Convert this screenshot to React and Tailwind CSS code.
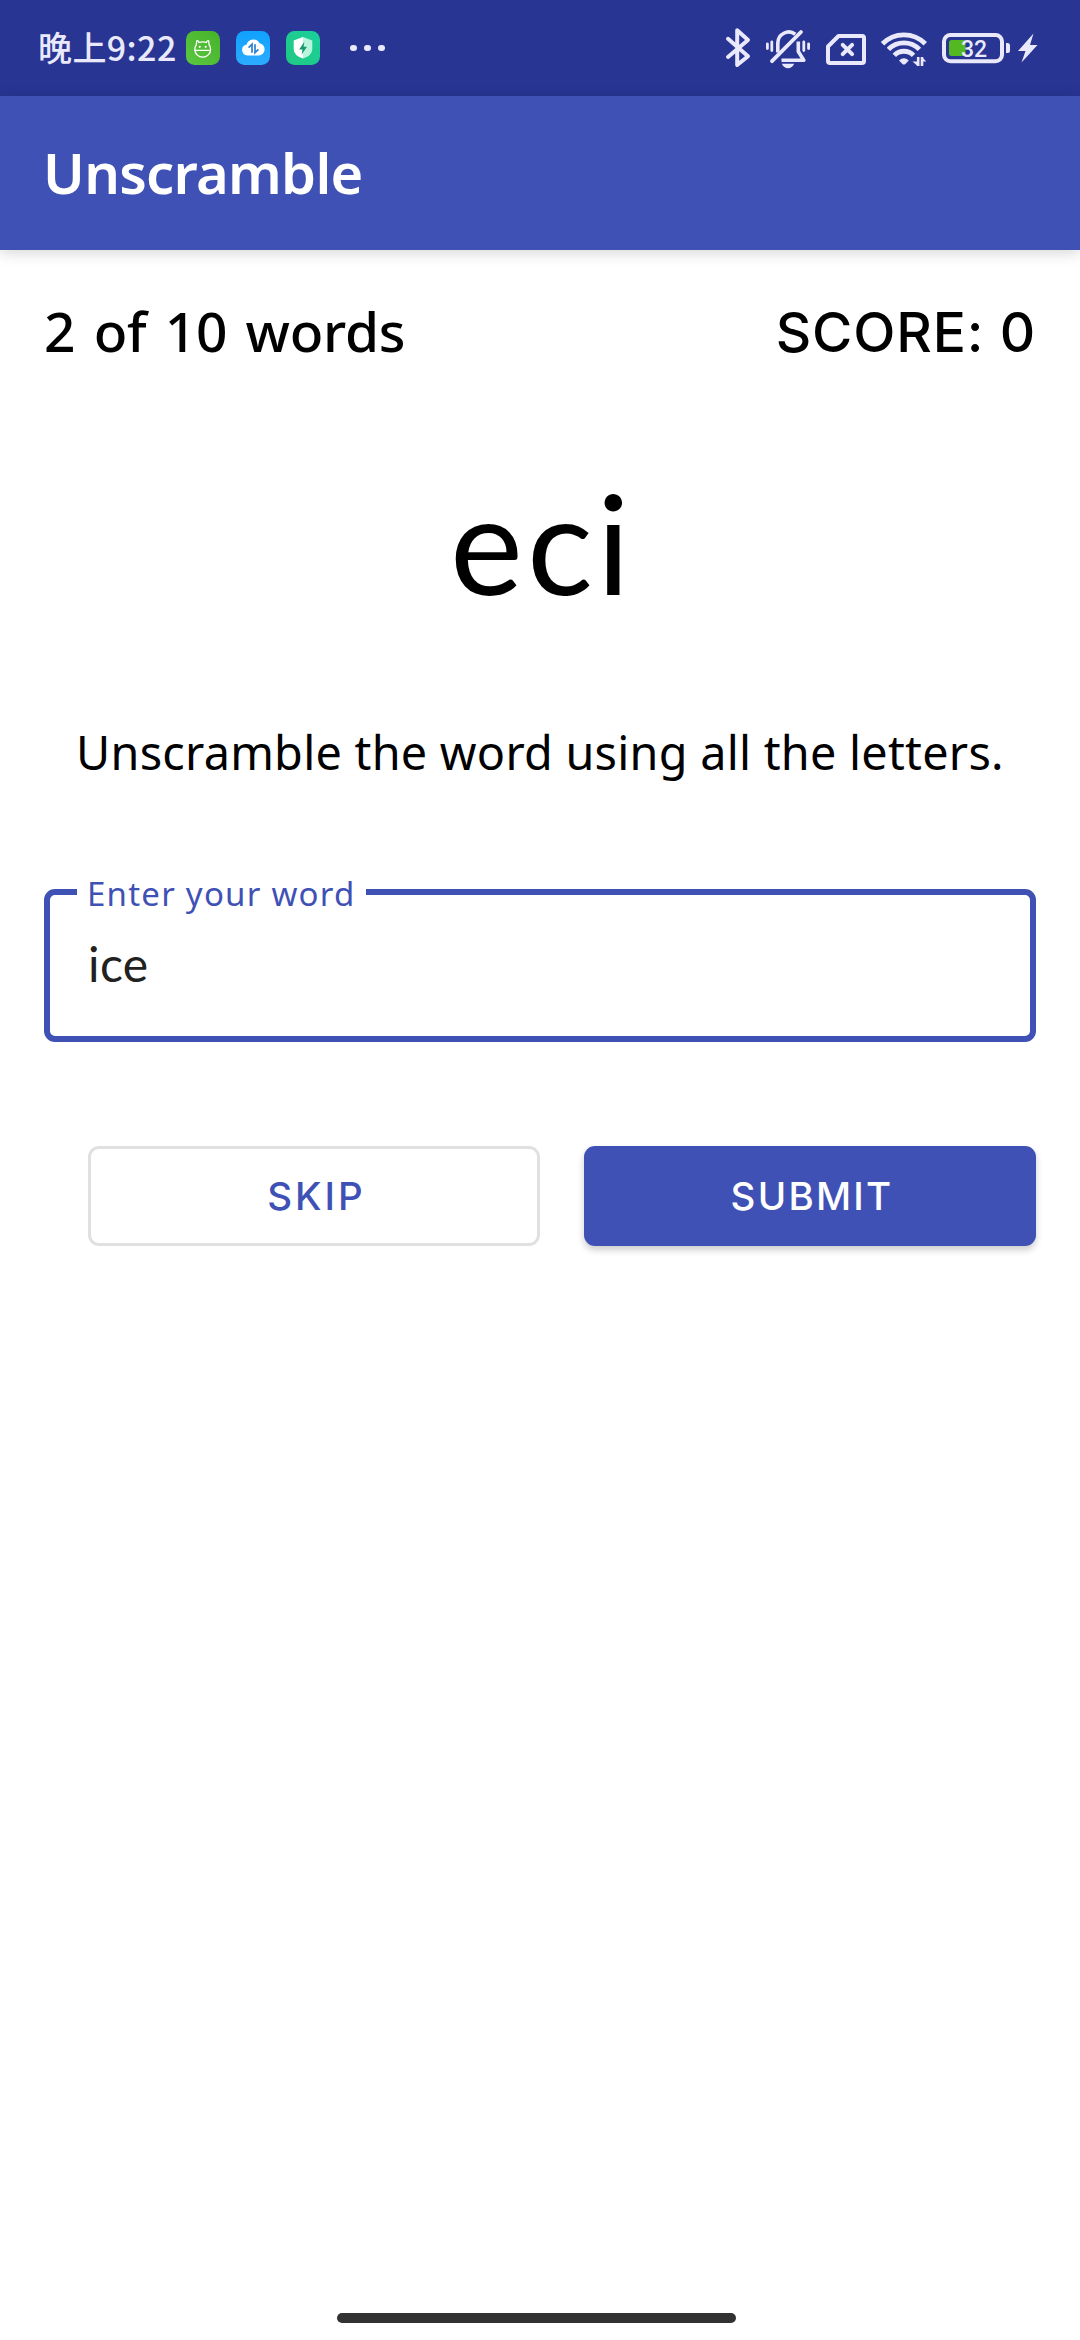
import React from "react";

const INK = "#e9e9fb";

function PotIcon() {
  return (
    <svg className="h-[34px] w-[34px]" viewBox="186 31 34 34">
      <defs>
        <linearGradient id="pot" x1="0" y1="1" x2="1" y2="0">
          <stop offset="0" stopColor="#5cc640" />
          <stop offset="1" stopColor="#45b329" />
        </linearGradient>
      </defs>
      <rect x="186" y="31" width="34" height="34" rx="8.5" fill="url(#pot)" />
      <g fill="none" stroke="#fff" strokeWidth="1.3" strokeLinecap="round" strokeLinejoin="round">
        <path d="M196.4 44.5l.3-3.6q1.6-.6 2.4 1.6q3.6-1.1 7.2 0q.8-2.2 2.4-1.6l.3 3.6q1.6 2.2 1.6 4.8a7.9 7.9 0 0 1-15.8 0q0-2.6 1.6-4.8z" />
        <path d="M195 50.3h15.5" />
      </g>
      <circle cx="199.7" cy="46.8" r="1.1" fill="#fff" />
      <circle cx="205.7" cy="46.8" r="1.1" fill="#fff" />
    </svg>
  );
}

function CloudIcon() {
  return (
    <svg className="h-[34px] w-[34px]" viewBox="236 31 34 34">
      <defs>
        <linearGradient id="cloud" x1="0" y1="0" x2="0" y2="1">
          <stop offset="0" stopColor="#0fa2ff" />
          <stop offset="1" stopColor="#2cabff" />
        </linearGradient>
      </defs>
      <rect x="236" y="31" width="34" height="34" rx="8.5" fill="url(#cloud)" />
      <path d="M247.5 55.5a5.6 5.6 0 0 1-.8-11.1a7 7 0 0 1 12.8-1.2a6.2 6.2 0 0 1-.8 12.3z" fill="#fff" />
      <path d="M248.6 47.6l3.4-3.4v8.6M255 44.2v8.6l3.4-3.4" fill="none" stroke="#2a7fd0" strokeWidth="1.7" />
    </svg>
  );
}

function ShieldIcon() {
  return (
    <svg className="h-[34px] w-[34px]" viewBox="286 31 34 34">
      <defs>
        <linearGradient id="shield" x1="1" y1="0" x2="0" y2="1">
          <stop offset="0" stopColor="#1bcf9b" />
          <stop offset="1" stopColor="#1fc983" />
        </linearGradient>
      </defs>
      <rect x="286" y="31" width="34" height="34" rx="8.5" fill="url(#shield)" />
      <path d="M303 37l9.3 3.6v8.4q0 6.5-9.3 9.6z" fill="#b9f5dc" />
      <path d="M303 37l-9.3 3.6v8.4q0 6.5 9.3 9.6z" fill="#fff" />
      <path d="M304.3 41.8l-5.1 7.6h3.3l-.9 5.2l5.4-7.8h-3.4z" fill="#16976c" />
    </svg>
  );
}

function BluetoothIcon() {
  return (
    <svg className="h-12 w-7" viewBox="724 24 28 48" fill="none" stroke={INK} strokeWidth="4" strokeLinecap="round" strokeLinejoin="round">
      <path d="M728 38.8L748 56.2L737.2 65V30.3L748 40L728 57" />
    </svg>
  );
}

function MutedBellIcon() {
  return (
    <svg className="h-12 w-12" viewBox="764 24 48 48" fill="none" stroke={INK} strokeLinecap="round" strokeLinejoin="round">
      <path strokeWidth="3.8" d="M801 32L772 61.2" />
      <path strokeWidth="3.6" strokeLinecap="butt" d="M777.8 52.5V43a11 11 0 0 1 17.5-8.8" />
      <path strokeWidth="3.6" strokeLinecap="butt" d="M798.3 41.5V51.5L803.8 60.2H781.5" />
      <path strokeWidth="2.8" d="M767.4 44v4.5M771.8 42v8.5M803.8 42v8.5M808.6 44v4.5" />
      <path d="M781.8 63.8h12.4q-2 4.4-6.2 4.4t-6.2-4.4z" fill={INK} stroke="none" />
    </svg>
  );
}

function NoSimIcon() {
  return (
    <svg className="h-12 w-11" viewBox="824 24 44 48" fill="none" stroke={INK} strokeWidth="4" strokeLinecap="round" strokeLinejoin="round">
      <path d="M838.5 36h23.5q2 0 2 2v23q0 2-2 2h-32q-2 0-2-2v-14.5z" />
      <path d="M842.7 44.8l9.4 9.4M852.1 44.8l-9.4 9.4" />
    </svg>
  );
}

function WifiIcon() {
  return (
    <svg className="h-12 w-12" viewBox="880 24 48 48" fill="none" stroke={INK} strokeWidth="4.8">
      <path d="M882.5 43.8a30 30 0 0 1 42.8 0" />
      <path d="M888.4 49.4a21.6 21.6 0 0 1 31 0" />
      <path d="M894.3 55.3a13.4 13.4 0 0 1 19.2 0" />
      <path d="M899 60.5q4.9-4.4 9.8 0l-3.4 3.4q-1.5 1.3-3 0z" fill={INK} stroke="none" />
      <path strokeWidth="2.6" d="M918.2 57v9M922 66v-9" />
      <path stroke="none" fill={INK} d="M912.5 61.5h5v4.5zM922 57l4.3 4.5h-4.3z" />
    </svg>
  );
}

function BatteryIcon() {
  return (
    <svg className="h-12 w-[72px]" viewBox="940 24 72 48">
      <rect x="944" y="35" width="58" height="26.2" rx="6.5" fill="none" stroke={INK} strokeWidth="4" />
      <rect x="949" y="40" width="16.5" height="16" rx="2.5" fill="#54b822" />
      <path d="M1006 43h1.5q2.5 0 2.5 2.5v5q0 2.5-2.5 2.5h-1.5z" fill={INK} />
      <text x="961" y="56.7" fontSize="23" fontWeight="500" fontFamily="Roboto, sans-serif" fill={INK}>32</text>
    </svg>
  );
}

function BoltIcon() {
  return (
    <svg className="h-12 w-6" viewBox="1016 24 24 48" fill={INK}>
      <path d="M1033.5 33.5L1018 51h7.5l-4 11.5L1037.5 45h-7.5z" />
    </svg>
  );
}

function StatusBar() {
  return (
    <div className="flex h-24 items-center bg-[#283593] pl-[38px] pr-10">
      <span className="h-[34px] w-[148px] whitespace-nowrap font-['Noto_Sans_CJK_SC',sans-serif] text-[34px] font-medium leading-[32px] tracking-[0.4px] text-[#e9e9fb]">
        晚上9:22
      </span>
      <div className="flex gap-4">
        <PotIcon />
        <CloudIcon />
        <ShieldIcon />
      </div>
      <div className="ml-[30px] flex gap-[7.5px]">
        <span className="size-[6.5px] rounded-full bg-[#e9e9fb]" />
        <span className="size-[6.5px] rounded-full bg-[#e9e9fb]" />
        <span className="size-[6.5px] rounded-full bg-[#e9e9fb]" />
      </div>
      <div className="ml-auto flex gap-3">
        <BluetoothIcon />
        <MutedBellIcon />
        <NoSimIcon />
        <WifiIcon />
        <div className="flex gap-1">
          <BatteryIcon />
          <BoltIcon />
        </div>
      </div>
    </div>
  );
}

export default function App() {
  return (
    <div className="flex h-[2340px] w-[1080px] flex-col bg-white font-['Noto_Sans',sans-serif] text-black">
      <StatusBar />
      <header className="flex h-[154px] items-center bg-[#3f51b5] pb-[2px] pl-[43px] shadow-[0_3px_14px_rgba(0,0,0,0.16)]">
        <h1 className="text-[56px] font-semibold leading-none tracking-[-0.7px] text-white">Unscramble</h1>
      </header>

      <main className="flex grow flex-col px-11 pt-11">
        <div className="flex h-[74px] items-baseline justify-between text-[55px] font-medium leading-[74px]">
          <span className="tracking-[-0.3px] [word-spacing:4.5px]">2 of 10 words</span>
          <span className="font-['Inter',sans-serif] tracking-[0.83px]">SCORE: 0</span>
        </div>

        <p className="mt-[90px] pl-[4px] text-center font-['Lato',sans-serif] text-[138px] leading-[168px] tracking-[4px]">eci</p>

        <p className="mt-[94px] whitespace-nowrap text-center text-[46.75px] leading-[64px] tracking-[0.26px]">
          Unscramble the word using all the letters.
        </p>

        <div className="relative mt-[105px] flex h-[153px] items-center rounded-[11px] border-6 border-[#3f51b5] pb-[3px] pl-[38px]">
          <label className="absolute -top-[21px] left-[27px] w-[289px] whitespace-nowrap bg-white pl-[10px] text-[33px] leading-[40px] tracking-[1.23px] text-[#3f51b5]">
            Enter your word
          </label>
          <span className="font-['Lato',sans-serif] text-[48px] leading-none tracking-[0.4px] text-[#212121]">ice</span>
        </div>

        <div className="mt-[104px] ml-11 grid grid-cols-2 gap-11 font-['Inter',sans-serif] text-[38.5px] font-medium">
          <button className="h-[100px] rounded-[11px] border-3 border-[#e0e0e0] pl-[5px] pt-[2px] tracking-[2.99px] text-[#3f51b5]">
            SKIP
          </button>
          <button className="h-[100px] rounded-[11px] bg-[#3f51b5] pl-[4px] pt-[2px] tracking-[2.24px] text-white shadow-[0_4px_7px_rgba(0,0,0,0.2)]">
            SUBMIT
          </button>
        </div>
      </main>

      <div className="mb-[17px] ml-[337px] h-[10px] w-[399px] rounded-full bg-[#323232]" />
    </div>
  );
}
